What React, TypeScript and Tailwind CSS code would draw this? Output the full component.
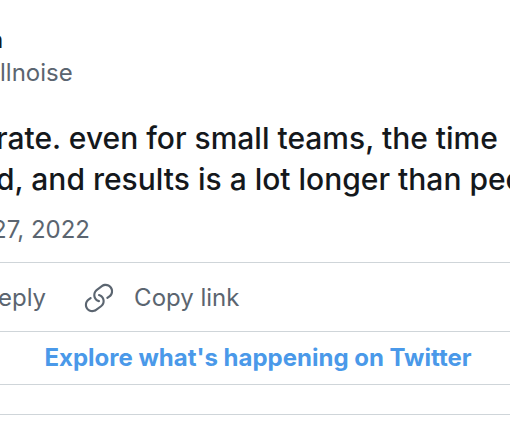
function LinkIcon() {
  return (
    <svg viewBox="0 0 24 24" className="size-[34px] fill-current" aria-hidden="true">
      <path d="M11.96 14.945c-.067 0-.136-.01-.203-.027-1.13-.318-2.097-.986-2.795-1.932-.832-1.125-1.176-2.508-.968-3.893s.942-2.605 2.068-3.438l3.53-2.608c2.322-1.716 5.61-1.224 7.33 1.1.83 1.127 1.175 2.51.967 3.895s-.943 2.605-2.07 3.438l-1.48 1.094c-.333.246-.804.175-1.05-.158-.246-.334-.176-.804.158-1.05l1.48-1.095c.803-.592 1.327-1.463 1.476-2.45.148-.988-.098-1.975-.69-2.778-1.225-1.656-3.572-2.01-5.23-.784l-3.53 2.608c-.802.593-1.326 1.464-1.475 2.45-.15.99.097 1.975.69 2.778.498.675 1.187 1.15 1.992 1.377.4.114.633.528.52.928-.092.33-.394.547-.722.547z" />
      <path d="M7.27 22.054c-1.61 0-3.197-.735-4.225-2.125-.832-1.127-1.176-2.51-.968-3.894s.943-2.605 2.07-3.438l1.478-1.094c.334-.245.805-.175 1.05.158s.177.804-.157 1.05l-1.48 1.095c-.803.593-1.326 1.464-1.475 2.45-.148.99.097 1.975.69 2.778 1.225 1.657 3.57 2.01 5.23.785l3.528-2.608c1.658-1.225 2.01-3.57.785-5.23-.498-.674-1.187-1.15-1.992-1.376-.4-.113-.633-.527-.52-.927.112-.4.528-.63.926-.522 1.13.318 2.096.986 2.794 1.932 1.717 2.324 1.224 5.612-1.1 7.33l-3.53 2.608c-.933.693-2.023 1.026-3.105 1.026z" />
    </svg>
  );
}

export default function App() {
  return (
    <main className="overflow-hidden whitespace-nowrap bg-white font-['Inter','Liberation_Sans',sans-serif] text-2xl text-[#5b6570]">
      <article>
        <header className="pt-6">
          <p className="-ml-3 font-bold leading-8 text-[#14181c]">n</p>
          <p className="leading-[34px]">llnoise</p>
        </header>
        <p className="-ml-1 pt-7 text-[30px] font-medium leading-[41px] text-[#14181c]">
          rate. even for small teams, the time
          <br />
          d, and results is a lot longer than peo
        </p>
        <p className="-ml-2 pt-3 pb-3.5 leading-9">27, 2022</p>
        <div className="flex h-[70px] items-center border-y border-[#cfd5d9]">
          <div className="-ml-0.5 flex items-center gap-9 pt-0.5">
            <button type="button">eply</button>
            <button type="button" className="flex items-center gap-[18px]">
              <LinkIcon />
              Copy link
            </button>
          </div>
        </div>
        <a
          href="#explore"
          className="flex h-[53px] items-center justify-center border-b border-[#cfd5d9] pl-1.5 font-bold text-[#4a99e9]"
        >
          Explore what's happening on Twitter
        </a>
      </article>
      <div className="h-[30px] border-b border-[#cfd5d9]" />
    </main>
  );
}
